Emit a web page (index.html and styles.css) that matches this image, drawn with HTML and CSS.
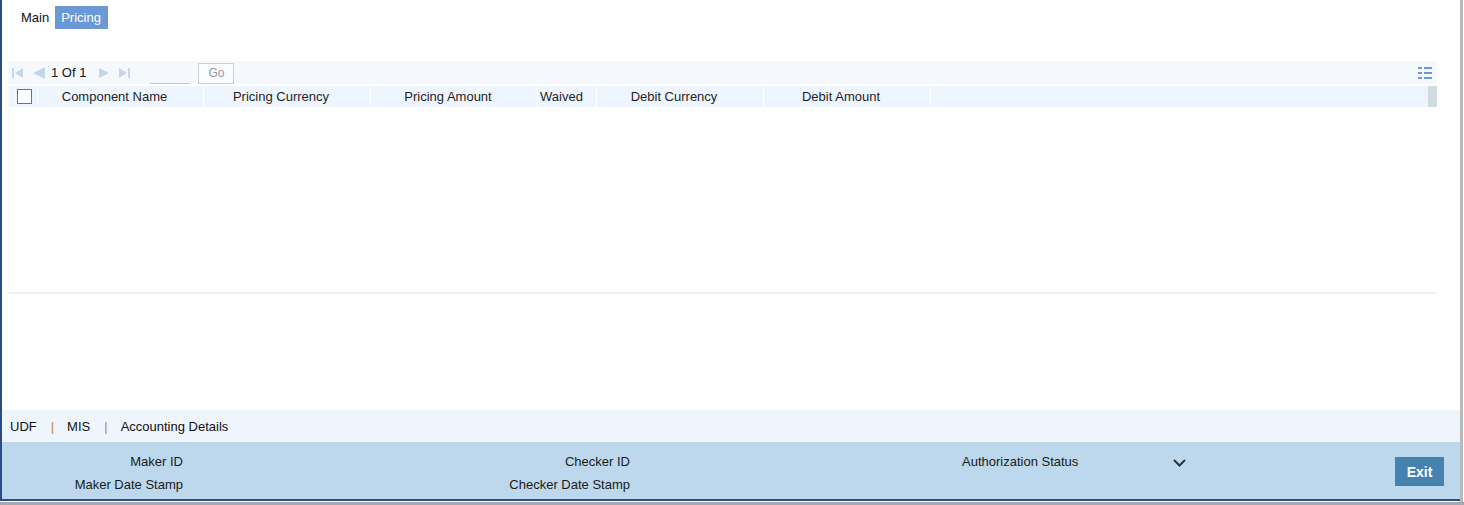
FILE: index.html
```html
<!DOCTYPE html>
<html>
<head>
<meta charset="UTF-8">
<link rel="stylesheet" href="styles.css">
</head>
<body>
<div class="window">
  <div class="frame">
    <div class="tabs">
      <span class="tab">Main</span>
      <span class="tab active">Pricing</span>
    </div>

    <div class="grid-box">
      <div class="toolbar">
        <div class="pager">
          <svg class="pg-icon" width="11" height="12" viewBox="0 0 11 12"><rect x="0" y="1" width="2" height="10"/><path d="M11 1 L3 6 L11 11 Z"/></svg>
          <svg class="pg-icon prev" width="12" height="12" viewBox="0 0 12 12"><path d="M12 0 L0 6 L12 12 Z"/></svg>
          <span class="page-num">1 Of 1</span>
          <svg class="pg-icon next" width="10" height="12" viewBox="0 0 10 12"><path d="M0 1 L10 6 L0 11 Z"/></svg>
          <svg class="pg-icon last" width="11" height="12" viewBox="0 0 11 12"><path d="M0 1 L8 6 L0 11 Z"/><rect x="9" y="1" width="2" height="10"/></svg>
          <span class="page-input"></span>
          <button class="go-btn">Go</button>
        </div>
        <svg class="col-icon" width="14" height="12" viewBox="0 0 14 12">
          <rect x="0" y="0" width="4" height="2"/><rect x="6" y="0" width="8" height="2"/>
          <rect x="0" y="5" width="4" height="2"/><rect x="6" y="5" width="8" height="2"/>
          <rect x="0" y="10" width="4" height="2"/><rect x="6" y="10" width="8" height="2"/>
        </svg>
      </div>
      <div class="grid-head">
        <div class="cell chk"><span class="checkbox"></span></div>
        <div class="cell w166">Component Name</div>
        <div class="cell w167">Pricing Currency</div>
        <div class="cell w167">Pricing Amount</div>
        <div class="cell w59">Waived</div>
        <div class="cell w167">Debit Currency</div>
        <div class="cell w167">Debit Amount</div>
        <div class="cell fill"></div>
        <div class="head-scroll"></div>
      </div>
      <div class="grid-body"></div>
    </div>

    <div class="spacer"></div>

    <div class="links">
      <span>UDF</span><span class="sep">|</span><span>MIS</span><span class="sep">|</span><span>Accounting Details</span>
    </div>

    <div class="audit">
      <div class="audit-col c1">
        <div>Maker ID</div>
        <div>Maker Date Stamp</div>
      </div>
      <div class="audit-col c2">
        <div>Checker ID</div>
        <div>Checker Date Stamp</div>
      </div>
      <div class="audit-col c3">
        <div class="status">Authorization Status
          <svg class="chevron" width="13" height="8" viewBox="0 0 13 8"><path d="M1 1 L6.5 6.5 L12 1" fill="none" stroke="#333" stroke-width="2"/></svg>
        </div>
      </div>
      <button class="exit-btn">Exit</button>
    </div>
  </div>
  <div class="vscroll"></div>
</div>
</body>
</html>
```

FILE: styles.css
```css
* {
  box-sizing: border-box;
  margin: 0;
  padding: 0;
}

body {
  width: 1464px;
  height: 505px;
  overflow: hidden;
  background: #fff;
  font-family: "Liberation Sans", Arial, sans-serif;
  font-size: 13px;
  color: #1a1a1a;
}

.window {
  display: flex;
  height: 505px;
  border-bottom: 3px solid #a8a8a8;
}

.frame {
  flex: 1;
  display: flex;
  flex-direction: column;
  height: 501px;
  border-left: 2px solid #2a4c8c;
  border-bottom: 2px solid #2a4c8c;
}

.vscroll {
  width: 4px;
  background: #b9b9b9;
  border-right: 1px solid #fff;
}

/* tabs */
.tabs {
  display: flex;
  padding: 6px 0 0 14px;
  height: 29px;
}

.tab {
  height: 23px;
  line-height: 23px;
  padding: 0 6px 0 5px;
  color: #111;
}

.tab.active {
  background: #6b99d6;
  color: #fff;
  padding: 0 7px 0 6px;
}

/* grid */
.grid-box {
  margin: 32px 0 0 6px;
  width: 1429px;
  height: 233px;
  border-left: 1px solid #f6f6fb;
  border-bottom: 2px solid #f0f0f8;
}

.toolbar {
  height: 23px;
  background: #f5f9fe;
  display: flex;
  align-items: center;
  justify-content: space-between;
  padding: 0 5px 0 3px;
}

.pager {
  display: flex;
  align-items: center;
}

.pg-icon {
  fill: #c5d6ec;
}

.pg-icon.prev {
  margin-left: 10px;
}

.page-num {
  margin-left: 6px;
  color: #111;
}

.pg-icon.next {
  margin-left: 13px;
}

.pg-icon.last {
  margin-left: 10px;
}

.page-input {
  display: inline-block;
  width: 40px;
  height: 20px;
  margin-left: 20px;
  border-bottom: 1px solid #c8c8c8;
  align-self: flex-end;
}

.go-btn {
  margin-left: 8px;
  width: 36px;
  height: 21px;
  background: #fafcff;
  border: 1px solid #cfcfcf;
  color: #999;
  font-family: inherit;
  font-size: 12px;
  margin-top: 1px;
}

.col-icon {
  fill: #5d8fd6;
  opacity: 0.9;
}

.grid-head {
  display: flex;
  height: 21px;
  margin-top: 2px;
  background: #eef5fe;
}

.cell {
  height: 21px;
  line-height: 21px;
  text-align: center;
  color: #1f1f1f;
  border-right: 1px solid #fff;
  padding-right: 12px;
}

.cell.chk {
  width: 29px;
  padding: 0;
  display: flex;
  align-items: center;
  justify-content: center;
}

.checkbox {
  width: 15px;
  height: 15px;
  border: 1px solid #3e7fb5;
  background: #fff;
  margin-left: 2px;
}

.w166 { width: 166px; }
.w167 { width: 167px; }
.w59 { width: 59px; padding-right: 11px; }

.cell.fill {
  flex: 1;
  border-right: none;
}

.head-scroll {
  width: 9px;
  background: #cfdde3;
}

.grid-body {
  height: 185px;
}

.spacer {
  height: 116px;
}

/* footer links */
.links {
  height: 32px;
  background: #eef5fd;
  display: flex;
  align-items: center;
  padding-left: 8px;
  color: #111;
}

.sep {
  color: #c8822e;
  margin: 0 13px 0 14px;
}

/* audit */
.audit {
  flex: 1;
  background: #bdd8ec;
  display: flex;
  padding-top: 8px;
}

.audit-col div {
  height: 24px;
  line-height: 24px;
  color: #1a1a1a;
}

.audit-col div:first-child {
  height: 23px;
  line-height: 23px;
}

.c1 {
  width: 181px;
  text-align: right;
}

.c2 {
  width: 447px;
  text-align: right;
}

.c3 {
  margin-left: 332px;
}

.status {
  display: flex;
  align-items: center;
}

.chevron {
  margin-left: 95px;
  margin-top: 2px;
}

.exit-btn {
  margin: 7px 16px 0 auto;
  width: 49px;
  height: 29px;
  background: #4682b0;
  color: #fff;
  border: none;
  font-family: inherit;
  font-size: 14px;
  font-weight: bold;
}
```
